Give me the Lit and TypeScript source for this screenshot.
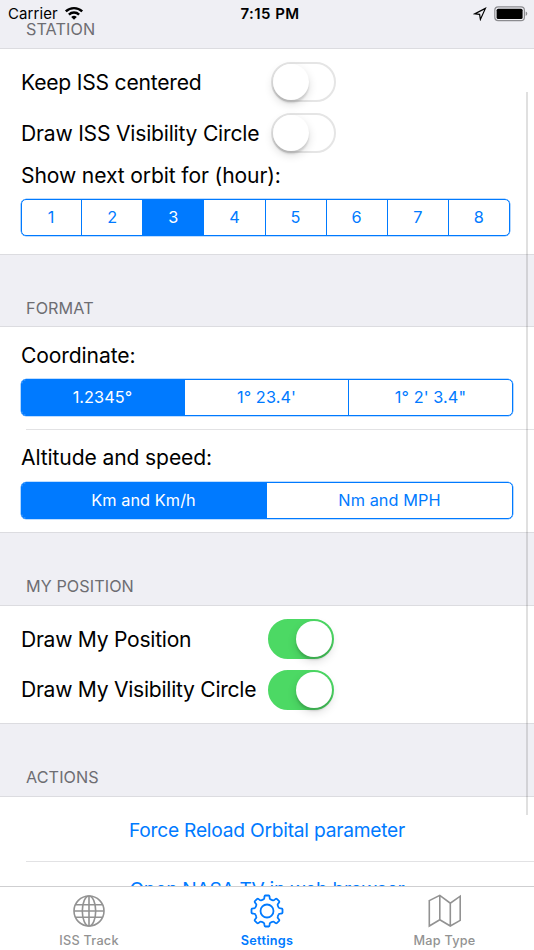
import { LitElement, html, css, svg } from "lit";
import { customElement, property } from "lit/decorators.js";

/* Closed outline of an eight-toothed gear centred on (cx, cy). */
function gearPath(cx: number, cy: number, root: number, tip: number): string {
  const at = (r: number, deg: number) => {
    const a = ((deg - 90) * Math.PI) / 180;
    return `${(cx + r * Math.cos(a)).toFixed(2)} ${(cy + r * Math.sin(a)).toFixed(2)}`;
  };
  let d = "";
  for (let i = 0; i < 8; i++) {
    const c = i * 45;
    d += `${i ? "L" : "M"}${at(root, c - 16)}`;
    d += `Q${at(root + 0.2, c - 12.5)} ${at(root + 1.2, c - 11.5)}`;
    d += `L${at(tip - 1.1, c - 10)}`;
    d += `Q${at(tip, c - 9)} ${at(tip, c - 6)}`;
    d += `L${at(tip, c + 6)}`;
    d += `Q${at(tip, c + 9)} ${at(tip - 1.1, c + 10)}`;
    d += `L${at(root + 1.2, c + 11.5)}`;
    d += `Q${at(root + 0.2, c + 12.5)} ${at(root, c + 16)}`;
    d += `Q${at(root - 0.3, c + 22.5)} ${at(root, c + 29)}`;
  }
  return d + "Z";
}

@customElement("ios-switch")
export class IosSwitch extends LitElement {
  @property({ type: Boolean, reflect: true }) on = false;

  static styles = css`
    :host {
      display: flex;
      box-sizing: border-box;
      width: 65px;
      height: 40px;
      padding: 0 0 0 1px;
      border: 2px solid #e5e5e5;
      border-radius: 20px;
      align-items: center;
      background: #fff;
    }
    :host([on]) {
      width: 66px;
      background: #4cd964;
      border-color: #4cd964;
      justify-content: flex-end;
      padding: 0;
    }
    .knob {
      width: 36px;
      height: 36px;
      border-radius: 50%;
      background: #fff;
      box-shadow: 0 3px 2px rgba(0, 0, 0, 0.12), 0 4px 10px rgba(0, 0, 0, 0.14);
    }
    :host(:not([on])) .knob {
      margin-left: -1.5px;
    }
  `;

  render() {
    return html`<div class="knob"></div>`;
  }
}

@customElement("ios-segments")
export class IosSegments extends LitElement {
  @property({ attribute: false }) items: string[] = [];
  @property({ type: Number }) selected = 0;

  static styles = css`
    :host {
      display: flex;
      box-sizing: border-box;
      height: 37px;
      border: 1px solid #007aff;
      border-radius: 5px;
      overflow: hidden;
      color: #007aff;
      font-size: 16.3px;
      letter-spacing: 0.08px;
      box-shadow: 0 0 0 0.3px #007aff;
    }
    .segment {
      flex: 1 1 0;
      display: flex;
      align-items: center;
      justify-content: center;
      white-space: pre;
      box-sizing: border-box;
      border-right: 1px solid #007aff;
      padding-bottom: 1px;
    }
    .segment:first-child {
      margin-left: -1px;
    }
    .segment:last-child {
      border-right: none;
    }
    .selected {
      background: #007aff;
      color: #fff;
    }
  `;

  render() {
    return this.items.map(
      (t, i) => html`<div class="segment ${i === this.selected ? "selected" : ""}">${t}</div>`
    );
  }
}

const globe = svg`<g fill="none" stroke="#929292" stroke-width="1.6">
  <circle cx="18" cy="18" r="15"/><ellipse cx="18" cy="18" rx="6.7" ry="15"/>
  <path d="M18 3V33M3 18H33M5 11.8H31M5 24.2H31"/></g>`;
const gear = svg`<g fill="none" stroke="#007aff" stroke-width="1.8" stroke-linejoin="round">
  <path d=${gearPath(18, 18, 12.2, 15.6)}/><circle cx="18" cy="18" r="6.5"/></g>`;
const map = svg`<path d="M2.3 7.6L12.8 2.4L23.3 10.2L33.2 3.2V27.4L23.3 33L12.8 26.8L2.3 33ZM12.8 2.4V26.8M23.3 10.2V33"
  fill="none" stroke="#929292" stroke-width="1.6"/>`;

@customElement("app-root")
export class AppRoot extends LitElement {
  static styles = css`
    :host {
      display: flex;
      flex-direction: column;
      position: relative;
      width: 534px;
      height: 950px;
      overflow: hidden;
      background: #efeff4;
      color: #000;
      font-family: Inter, "Liberation Sans", sans-serif;
    }
    .status {
      position: absolute;
      inset: 0 0 auto 0;
      height: 27px;
      display: grid;
      grid-template-columns: 1fr auto 1fr;
      align-items: center;
      font-size: 15px;
      box-sizing: border-box;
      padding: 0 6px 0 8px;
    }
    .left,
    .right {
      display: flex;
      align-items: center;
    }
    .left {
      gap: 6px;
      letter-spacing: 0.1px;
    }
    .right {
      justify-content: flex-end;
      gap: 7px;
    }
    .time {
      font-weight: 600;
      letter-spacing: 0.45px;
      padding-left: 4px;
    }
    .list {
      flex: 1;
      min-height: 0;
      overflow: hidden;
    }
    .header {
      box-sizing: border-box;
      height: 72px;
      padding: 42px 26px 0;
      font-size: 16.2px;
      line-height: 22px;
      letter-spacing: 0.08px;
      color: #6d6d72;
    }
    .header.first {
      height: 48px;
      padding-top: 18px;
    }
    .station + .header {
      height: 71px;
    }
    .group {
      box-sizing: border-box;
      background: #fff;
      border: solid #dcdce0;
      border-width: 1px 0;
      font-size: 21.1px;
      letter-spacing: -0.12px;
    }
    .station {
      height: 207px;
      padding: 13px 24px 0 21px;
    }
    .format {
      height: 207px;
    }
    .position {
      height: 119px;
      padding: 13px 0 0 21px;
    }
    .actions {
      height: 170px;
    }
    .row {
      display: flex;
      height: 50.5px;
      align-items: flex-start;
      letter-spacing: -0.21px;
    }
    .label {
      height: 40px;
      line-height: 40px;
      white-space: nowrap;
    }
    .row .label {
      width: 250px;
    }
    .station .row .label {
      line-height: 42px;
    }
    .position .row .label {
      width: 247px;
      line-height: 42px;
      letter-spacing: -0.27px;
    }
    .position .row + .row .label {
      line-height: 39px;
    }
    .label.caption {
      height: 26px;
      line-height: 26px;
      margin-bottom: 10px;
    }
    .cell {
      box-sizing: border-box;
      height: 102px;
      padding: 16px 21px 0 21px;
    }
    .rule + .cell {
      padding-top: 15px;
    }
    .rule + .cell .caption {
      margin-bottom: 11px;
    }
    .rule {
      height: 1px;
      margin-left: 26px;
      background: #e2e2e4;
    }
    .action {
      height: 64px;
      display: flex;
      align-items: center;
      justify-content: center;
      padding-top: 2px;
      box-sizing: border-box;
      color: #007aff;
      font-size: 19.2px;
      letter-spacing: -0.23px;
    }
    .rule + .action {
      height: 51px;
      letter-spacing: -0.3px;
    }
    .thumb {
      position: absolute;
      left: 526px;
      top: 92px;
      width: 2px;
      height: 723px;
      background: rgba(0, 0, 0, 0.12);
    }
    .tabs {
      flex: none;
      display: grid;
      grid-template-columns: repeat(3, 1fr);
      box-sizing: border-box;
      height: 64px;
      border-top: 1px solid #cfcfd1;
      background: #fff;
    }
    .tab {
      display: flex;
      flex-direction: column;
      align-items: center;
      padding-top: 6px;
      gap: 4px;
      color: #929292;
      font-size: 12.7px;
      font-weight: 500;
      line-height: 16px;
      letter-spacing: 0.25px;
    }
    .tab:last-child {
      padding-right: 1px;
    }
    .tab.active {
      color: #007aff;
      font-weight: 600;
    }
  `;

  render() {
    return html`
      <div class="list">
        <div class="header first">STATION</div>
        <div class="group station">
          <div class="row"><div class="label">Keep ISS centered</div><ios-switch></ios-switch></div>
          <div class="row"><div class="label">Draw ISS Visibility Circle</div><ios-switch></ios-switch></div>
          <div class="label caption">Show next orbit for (hour):</div>
          <ios-segments .items=${["1", "2", "3", "4", "5", "6", "7", "8"]} .selected=${2}></ios-segments>
        </div>
        <div class="header">FORMAT</div>
        <div class="group format">
          <div class="cell">
            <div class="label caption">Coordinate:</div>
            <ios-segments .items=${["1.2345°", "1° 23.4'", "1° 2' 3.4\""]} .selected=${0}></ios-segments>
          </div>
          <div class="rule"></div>
          <div class="cell">
            <div class="label caption">Altitude and speed:</div>
            <ios-segments .items=${["Km and Km/h", "Nm and MPH"]} .selected=${0}></ios-segments>
          </div>
        </div>
        <div class="header">MY POSITION</div>
        <div class="group position">
          <div class="row"><div class="label">Draw My Position</div><ios-switch on></ios-switch></div>
          <div class="row"><div class="label">Draw My Visibility Circle</div><ios-switch on></ios-switch></div>
        </div>
        <div class="header">ACTIONS</div>
        <div class="group actions">
          <div class="action">Force Reload Orbital parameter</div>
          <div class="rule"></div>
          <div class="action">Open NASA TV in web browser</div>
        </div>
      </div>
      <nav class="tabs">
        <div class="tab"><svg width="36" height="36">${globe}</svg>ISS Track</div>
        <div class="tab active"><svg width="36" height="36">${gear}</svg>Settings</div>
        <div class="tab"><svg width="36" height="36">${map}</svg>Map Type</div>
      </nav>
      <div class="status">
        <div class="left">
          <span>Carrier</span>
          <svg width="20" height="15" viewBox="0 0 20 15">
            <g fill="none" stroke="#000" stroke-width="2.4">
              <path d="M1.8 5.4A11.8 11.8 0 0 1 18.2 5.4"/>
              <path d="M4.9 8.6A7.2 7.2 0 0 1 15.1 8.6"/>
            </g>
            <path d="M10 13.8L7.2 11A4 4 0 0 1 12.8 11Z"/>
          </svg>
        </div>
        <div class="time">7:15 PM</div>
        <div class="right">
          <svg width="14" height="14" viewBox="0 0 14 14">
            <path d="M12.4 1.4L1.6 6.9L6.6 7.3L7.4 12.4Z" fill="none" stroke="#000" stroke-width="1.2"/>
          </svg>
          <svg width="34" height="16" viewBox="0 0 34 16">
            <rect x="0.8" y="0.9" width="29.6" height="13.8" rx="3.4" fill="none" stroke="#8c8c90" stroke-width="1.2"/>
            <rect x="2.6" y="2.7" width="26" height="10.2" rx="1.5"/>
            <path d="M31.7 5.6Q33.3 6.2 33.3 7.8T31.7 10Z" fill="#8c8c90"/>
          </svg>
        </div>
      </div>
      <div class="thumb"></div>
    `;
  }
}
